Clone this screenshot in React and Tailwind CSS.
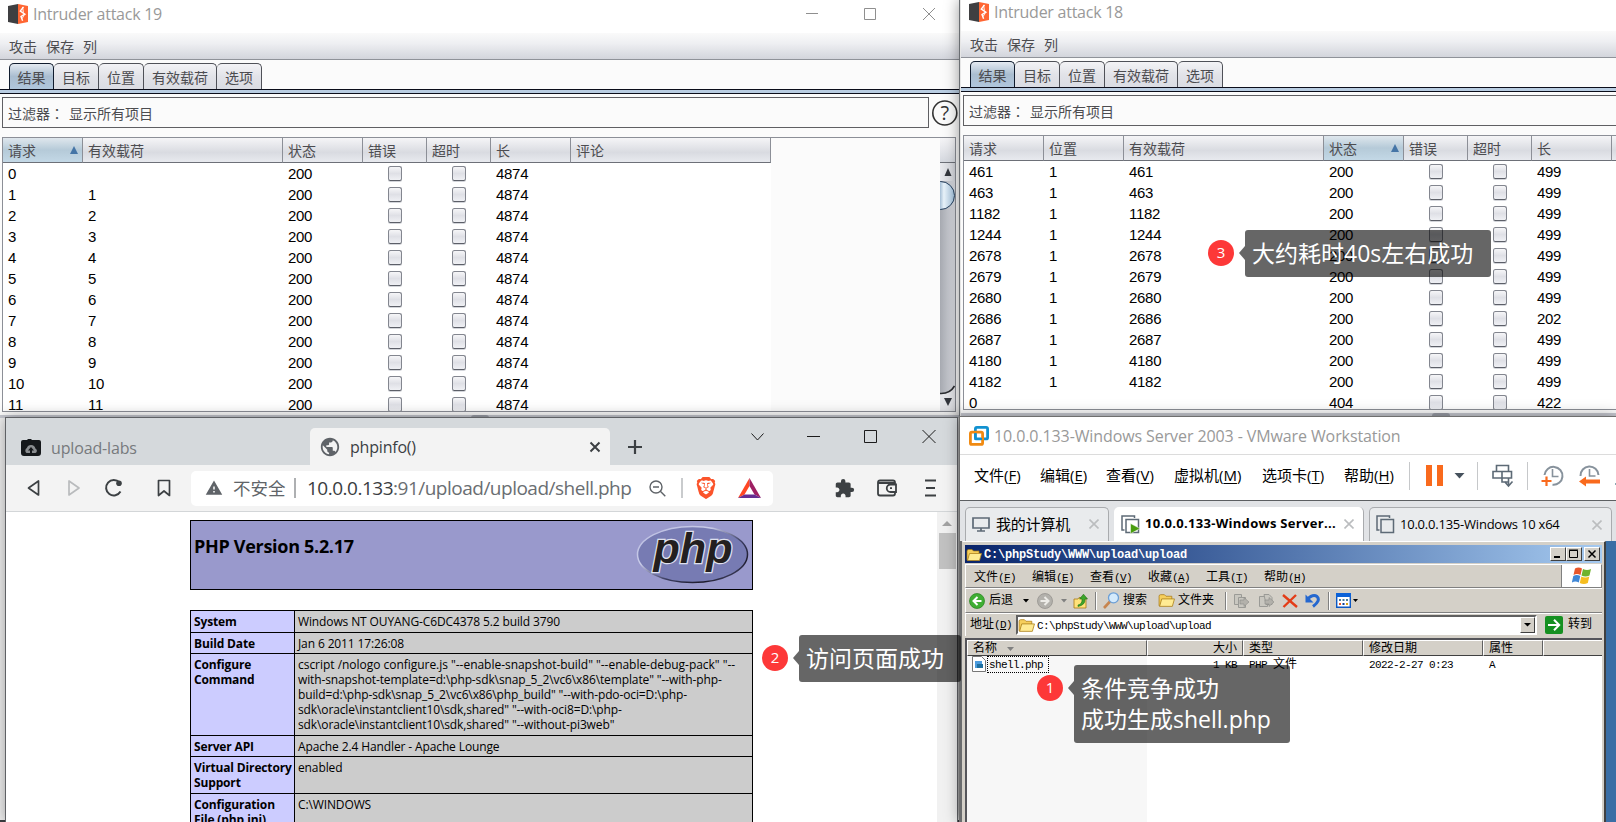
import React from "react";
import { MdExtension, MdPublic, MdWarning } from "react-icons/md";
import { SiBrave } from "react-icons/si";

/* ---------- Intruder windows ---------- */

function BurpLogo() {
  return (
    <svg width="20" height="20" viewBox="0 0 20 20" className="shrink-0">
      <path d="M0 2 10 0v20L0 18z" fill="#3f3f41" />
      <path d="M10 0 20 2v16l-10 2z" fill="#ff6633" />
      <path d="M15.5 2.8 12.3 7l4.6 3.2-3.9 2.3 1.6 4.2" fill="none" stroke="#fff" strokeWidth="1.4" />
      <path d="m14.6 3 .8 5.6M16.7 10l-2.6 4.6" fill="none" stroke="#fff" strokeWidth="0.9" />
    </svg>
  );
}

function CheckCell() {
  return (
    <span className="mx-auto mb-[1px] block h-[15px] w-[14px] rounded-[2.5px] border border-[#83868f] border-b-[#5c5f68] bg-linear-to-b from-[#f6f6f8] via-[#dfe0e6] to-[#eff0f4] shadow-[0_1px_0_#d3d5da]" />
  );
}

const TABS = [
  ["结果", "w-[45px]"],
  ["目标", "w-[45px]"],
  ["位置", "w-[45px]"],
  ["有效载荷", "w-[73px]"],
  ["选项", "w-[45px]"],
];

function IntruderWindow({ title, lead, columns, rows, wide, controls, tableHeight }) {
  return (
    <div className="flex h-full flex-col bg-[#fbfbfb] text-[14px] text-[#4c4c50]">
      <div className={`flex shrink-0 items-center bg-white pl-2 ${lead}`}>
        <BurpLogo />
        <span className="ml-[5px] text-[16px] leading-5 tracking-[-0.25px] text-[#999]">{title}</span>
        {controls}
      </div>
      <div className="flex h-[27px] shrink-0 items-center gap-[9px] border-b border-[#8f9299] bg-linear-to-b from-[#fafafa] via-[#eeeff2] via-40% to-[#d3d5dc] pl-[9px]">
        <span>攻击</span>
        <span>保存</span>
        <span>列</span>
      </div>
      <div className="flex h-[29px] shrink-0 items-end pl-[9px]">
        {TABS.map(([t, w], i) => (
          <div
            key={t}
            className={`flex h-[26px] items-center justify-center rounded-t-[5px] border border-b-0 pt-[1px] ${w} ${
              i === 0
                ? "z-10 border-[#101c2e] bg-linear-to-b from-[#e4eaf1] via-[#a9bdd0] to-[#b0c6dc]"
                : "border-l-0 border-[#4f5158] bg-linear-to-b from-[#f3f3f6] via-[#e2e3e8] to-[#dadce3]"
            }`}
          >
            {t}
          </div>
        ))}
      </div>
      <div className="h-[5px] shrink-0 border-y border-[#0b0d1a] bg-[#b9cde2]" />
      <div className="mt-[3px] flex h-[31px] shrink-0 items-center pl-[2px]">
        <div className={`flex h-[31px] shrink-0 items-center gap-[5px] border border-[#5f5f63] pl-[5px] pt-[1px] ${wide ? "w-[927px]" : "w-[700px]"}`}>
          <span className="flex w-14">过滤器<span className="font-[Noto_Sans_CJK_TC,sans-serif]">：</span></span>
          <span>显示所有项目</span>
        </div>
        {wide && (
          <svg width="26" height="26" viewBox="0 0 26 26" className="ml-[3px] shrink-0">
            <circle cx="12.8" cy="13" r="12" fill="none" stroke="#333" strokeWidth="1.6" />
            <text x="12.8" y="20" textAnchor="middle" fontSize="20" fill="#333" fontFamily="Open Sans, sans-serif">?</text>
          </svg>
        )}
      </div>
      <div className={`ml-[2px] mt-[9px] flex shrink-0 overflow-hidden border border-[#8c8f97] ${tableHeight} ${wide ? "w-[954px]" : "w-[700px]"}`}>
        <div className="flex-1">
          <div className="flex h-[25px]">
            {columns.map((c) => (
              <div
                key={c.label}
                className={`flex shrink-0 items-center justify-between border-b border-r border-b-[#6d7078] border-r-[#8c8f97] pl-[5px] pr-1 ${c.w} ${
                  c.sorted
                    ? "bg-linear-to-b from-[#dfe7ed] via-[#b5cad8] to-[#c3d8e6]"
                    : "bg-linear-to-b from-[#f5f5f7] via-[#d9dbe1] via-60% to-[#e8eaef]"
                }`}
              >
                <span>{c.label}</span>
                {c.sorted && (
                  <svg width="8" height="8" viewBox="0 0 8 8">
                    <path d="M4 0 8 8H0z" fill="#4575a6" />
                  </svg>
                )}
              </div>
            ))}
          </div>
          <div className={`bg-white ${wide ? "w-[768px]" : "w-[700px]"}`}>
            {rows.map((r, i) => (
              <div key={i} className="flex h-[21px] items-center font-[Liberation_Sans,sans-serif] text-[15px] leading-[21px] tracking-[-0.3px] text-black">
                {columns.map((c, j) => (
                  <div key={c.label} className={`shrink-0 ${c.check ? "" : "pl-[5px]"} ${c.w}`}>
                    {c.check ? <CheckCell /> : r[j]}
                  </div>
                ))}
              </div>
            ))}
          </div>
        </div>
        {wide && (
          <div className="flex w-[15px] shrink-0 flex-col overflow-hidden bg-linear-to-r from-[#a6a9b0] to-[#dadce2]">
            <div className="h-[25px] border-b border-[#6d7078] bg-linear-to-b from-[#f5f5f7] to-[#d5d8df]" />
            <div className="flex h-[18px] items-center justify-center bg-linear-to-r from-[#e8e9ed] to-[#d2d4da]">
              <svg width="8" height="8" viewBox="0 0 8 8">
                <path d="M4 0 7.5 8h-7z" fill="#33363d" />
              </svg>
            </div>
            <div className="-ml-4 h-[29px] w-[31px] shrink-0 rounded-[15px] border border-[#25405e] bg-linear-to-r from-[#9cb7d0] from-50% via-[#e9f3fa] via-65% to-[#a8c6df]" />
            <div className="flex-1" />
            <svg width="15" height="26" viewBox="0 0 15 26" className="shrink-0">
              <path d="M0 9Q13 9 15 0v26H0z" fill="#e3e4e8" />
              <path d="M0 8.5Q10 9 14.5 1" fill="none" stroke="#2a2c30" strokeWidth="1.6" />
              <path d="M4 13h8l-4 8z" fill="#33363d" />
            </svg>
          </div>
        )}
      </div>
      <div className="mt-[3px] flex h-[3px] shrink-0 justify-center bg-[#c6c8d0]">
        <span className={`h-[3px] w-[18px] rounded-t bg-[#999ca5] ${wide ? "" : "ml-[304px]"}`} />
      </div>
      <div className="flex-1 bg-[#efefef]" />
      <div className="h-[2px] shrink-0 bg-[#3c3e42]" />
    </div>
  );
}

const COLS_A = [
  { label: "请求", w: "w-[80px]", sorted: true },
  { label: "有效载荷", w: "w-[200px]" },
  { label: "状态", w: "w-[80px]" },
  { label: "错误", w: "w-[64px]", check: true },
  { label: "超时", w: "w-[64px]", check: true },
  { label: "长", w: "w-[80px]" },
  { label: "评论", w: "w-[200px]" },
];
const ROWS_A = Array.from({ length: 12 }, (_, i) => [i, i === 0 ? "" : i, 200, null, null, 4874, ""]);

const COLS_B = [
  { label: "请求", w: "w-[80px]" },
  { label: "位置", w: "w-[80px]" },
  { label: "有效载荷", w: "w-[200px]" },
  { label: "状态", w: "w-[80px]", sorted: true },
  { label: "错误", w: "w-[64px]", check: true },
  { label: "超时", w: "w-[64px]", check: true },
  { label: "长", w: "w-[80px]" },
  { label: "", w: "w-[40px]" },
];
const ROWS_B = [
  ...[461, 463, 1182, 1244, 2678, 2679, 2680, 2686, 2687, 4180, 4182].map((n) => [
    n, 1, n, 200, null, null, n === 2686 ? 202 : 499, "",
  ]),
  [0, "", "", 404, null, null, 422, ""],
];

function TitleControls() {
  return (
    <svg width="131" height="14" viewBox="0 0 131 14" className="ml-auto mr-[22px]" fill="none" stroke="#8f8f8f">
      <path d="M0 6.5h12M58.500 1.500h11v11h-11zM117 1l12 12M129 1l-12 12" />
    </svg>
  );
}

/* ---------- Browser ---------- */

function Browser() {
  return (
    <div className="flex h-full flex-col border border-b-0 border-[#5f6165] bg-white">
      <div className="flex h-[47px] shrink-0 bg-[#d5d9dc]">
        <div className="flex w-[304px] items-center pl-[15px] pt-[12px]">
          <svg width="20" height="17" viewBox="0 0 20 17">
            <path d="M0 3q0-2 2-2h4l1-1h3l1 1h7q2 0 2 2v11q0 3-3 3H3q-3 0-3-3z" fill="#15181b" />
            <path d="M5.500 14a3 3 0 0 1 .3-5 4.500 4.500 0 0 1 8.600.4 2.500 2.500 0 0 1 0 4.600z" fill="#8a8d90" />
            <path d="m10 8 3 3.500h-2V14H9v-2.500H7z" fill="#15181b" />
          </svg>
          <span className="ml-[10px] text-[16px] tracking-[-0.15px] text-[#777a7d]">upload-labs</span>
        </div>
        <div className="mt-[10px] flex w-[300px] items-center rounded-t-[5px] bg-[#f3f3f3] pl-[9px] pr-[9px] pt-[1px]">
          <MdPublic size={22} color="#5f6368" />
          <span className="ml-[9px] text-[16px] tracking-[-0.2px] text-[#3c4043]">phpinfo()</span>
          <svg width="12" height="12" viewBox="0 0 12 12" className="ml-auto" stroke="#3c4043" strokeWidth="2">
            <path d="m1.500 1.500 9 9m0-9-9 9" />
          </svg>
        </div>
        <svg width="16" height="16" viewBox="0 0 16 16" className="ml-[17px] mt-[21px]" stroke="#3c4043" strokeWidth="2.200">
          <path d="M8 1v14M1 8h14" />
        </svg>
        <svg width="188" height="16" viewBox="0 0 188 16" className="ml-auto mr-[-1px] mt-[10px]" fill="none" stroke="#1c1c1c">
          <path d="m3.500 5.500 6 6.500 6-6.500M59 8.500h13M116.500 2.500h12v12h-12zM187.500 2l-13 13M174.500 2l13 13" />
        </svg>
        <div className="w-[22px]" />
      </div>
      <div className="flex h-[47px] shrink-0 items-center border-b border-[#d3d6d8] bg-[#f3f3f3]">
        <svg width="150" height="20" viewBox="0 0 150 20" className="ml-[20px] shrink-0" fill="none" stroke="#3c4043" strokeWidth="1.700" strokeLinejoin="round">
          <path d="m2.500 10 10-7v14z" />
          <path d="m53 10-10-7v14z" stroke="#b9bbbd" />
          <path d="M94.500 13.500a7.700 7.700 0 1 1-1-9" strokeWidth="2" />
          <circle cx="93" cy="5.300" r="2.800" fill="#3c4043" stroke="none" />
          <path d="M132.500 2.500h11v15l-5.500-4.500-5.500 4.500z" />
        </svg>
        <div className="ml-[15px] flex h-[35px] w-[582px] shrink-0 items-center rounded-[5px] bg-white pl-[14px]">
          <MdWarning size={18} color="#5f6368" />
          <span className="ml-[10px] w-[53px] whitespace-nowrap text-[17.5px] text-[#606468]">不安全</span>
          <span className="ml-[8px] h-5 w-[2px] bg-[#aeb0b2]" />
          <span className="ml-[11px] w-[330px] whitespace-nowrap text-[19px] leading-6 tracking-[-0.5px] text-[#6a6e72]">
            <span className="text-[#3a3d41]">10.0.0.133</span>:91/upload/upload/shell.php
          </span>
          <svg width="17" height="17" viewBox="0 0 17 17" className="ml-[12px]" fill="none" stroke="#5f6368" strokeWidth="1.400">
            <circle cx="7" cy="7" r="6" />
            <path d="m11.300 11.300 5 5M4 7h6" />
          </svg>
          <span className="ml-[15px] h-5 w-[2px] bg-[#c9cbcd]" />
          <SiBrave size={22} color="#fb542b" className="ml-[12px] shrink-0" />
          <svg width="23" height="20" viewBox="0 0 23 20" className="ml-[21px] shrink-0">
            <path d="M11.500 0 0 20l6.500-3.500 5-8.500z" fill="#ff4724" />
            <path d="M11.500 0 23 20l-6.500-3.500-5-8.500z" fill="#9e1f63" />
            <path d="M0 20h23l-6.500-3.500h-10z" fill="#662d91" />
          </svg>
        </div>
        <MdExtension size={21} color="#3c4043" className="ml-[61px] shrink-0" />
        <svg width="60" height="20" viewBox="0 0 60 20" className="ml-[22px] shrink-0" fill="none" stroke="#3c4043" strokeWidth="1.800">
          <path d="M18 6V4.500q0-2-2-2H3q-2 0-2 2v11q0 2 2 2h13q2 0 2-2V14M1 5h17" />
          <path d="M19 6.500h-5.500a3.700 3.700 0 0 0 0 7.500H19z" fill="#f3f3f3" />
          <path d="M13 10.200h2M48 2.500h11M49 10h9M48 17.500h11" />
        </svg>
      </div>
      <div className="flex min-h-0 flex-1 overflow-hidden">
        <div className="w-[931px] shrink-0 pl-[184px] pt-[8px] text-black">
          <div className="flex h-[70px] w-[563px] justify-between border border-black bg-[#9999cc] pl-[3px] pr-[3px]">
            <h1 className="mt-[13px] text-[18px] font-bold leading-6 tracking-[-0.3px]">PHP Version 5.2.17</h1>
            <svg width="113" height="60" viewBox="0 0 113 60" className="mt-[4px]">
              <defs>
                <linearGradient id="rim" x1="0" y1="0" x2="1" y2="1">
                  <stop offset="0" stopColor="#b9bce0" />
                  <stop offset="0.350" stopColor="#c8cbe8" />
                  <stop offset="0.600" stopColor="#3a3c60" />
                  <stop offset="0.800" stopColor="#1d1b2c" />
                  <stop offset="1" stopColor="#777bb3" />
                </linearGradient>
              </defs>
              <ellipse cx="56.500" cy="29.500" rx="55" ry="28" fill="#777bb3" stroke="url(#rim)" strokeWidth="1.500" />
              <text x="57" y="38" textAnchor="middle" fontFamily="Liberation Sans, sans-serif" fontWeight="bold" fontStyle="italic" fontSize="42" textLength="79" lengthAdjust="spacingAndGlyphs" fill="#231f20" stroke="#dfe0ee" strokeWidth="2.500" paintOrder="stroke">
                php
              </text>
            </svg>
          </div>
          <div className="mt-[20px] w-[563px] border-x border-t border-black text-[12px] leading-[15px]">
            {PHP_ROWS.map(([k, v, h]) => (
              <div key={k[0]} className={`flex border-b border-black ${h}`}>
                <div className="w-[104px] shrink-0 border-r border-black bg-[#ccccff] pl-[3px] pt-[3px] font-bold tracking-[-0.15px]">
                  {k.map((s) => (
                    <div key={s} className="whitespace-nowrap">{s}</div>
                  ))}
                </div>
                <div className="flex-1 bg-[#cccccc] pl-[3px] pt-[3px] tracking-[-0.12px]">
                  {v.map((s) => (
                    <div key={s} className={`whitespace-nowrap ${s.startsWith("cscript") ? "tracking-[-0.03px]" : ""}`}>{s}</div>
                  ))}
                </div>
              </div>
            ))}
          </div>
        </div>
        <div className="flex flex-1 flex-col items-center bg-[#f1f1f1] pt-[9px]">
          <svg width="10" height="5" viewBox="0 0 10 5">
            <path d="m5 0 5 5H0z" fill="#a3a3a3" />
          </svg>
          <div className="mt-[7px] h-[36px] w-[17px] bg-[#c1c1c1]" />
        </div>
      </div>
    </div>
  );
}

const PHP_ROWS = [
  [["System"], ["Windows NT OUYANG-C6DC4378 5.2 build 3790"], "h-[22px]"],
  [["Build Date"], ["Jan 6 2011 17:26:08"], "h-[21px]"],
  [
    ["Configure", "Command"],
    [
      'cscript /nologo configure.js "--enable-snapshot-build" "--enable-debug-pack" "--',
      'with-snapshot-template=d:\\php-sdk\\snap_5_2\\vc6\\x86\\template" "--with-php-',
      'build=d:\\php-sdk\\snap_5_2\\vc6\\x86\\php_build" "--with-pdo-oci=D:\\php-',
      'sdk\\oracle\\instantclient10\\sdk,shared" "--with-oci8=D:\\php-',
      'sdk\\oracle\\instantclient10\\sdk,shared" "--without-pi3web"',
    ],
    "h-[82px]",
  ],
  [["Server API"], ["Apache 2.4 Handler - Apache Lounge"], "h-[21px]"],
  [["Virtual Directory", "Support"], ["enabled"], "h-[37px]"],
  [["Configuration", "File (php.ini)"], ["C:\\WINDOWS"], "h-[40px]"],
];

/* ---------- VMware + guest ---------- */

function Item({ t, k, w }) {
  return (
    <span className={`shrink-0 whitespace-nowrap ${w}`}>
      {t}(<u className="underline-offset-2">{k}</u>)
    </span>
  );
}

function CloseMark() {
  return (
    <svg width="10" height="10" viewBox="0 0 10 10" className="shrink-0" stroke="#bbbdbf" strokeWidth="1.600">
      <path d="m.5.5 9 9m0-9-9 9" />
    </svg>
  );
}

function VmStack({ running }) {
  return (
    <svg width="19" height="19" viewBox="0 0 19 19" className="shrink-0" fill="none" stroke="#5d6a76" strokeWidth="1.500">
      <path d="M13.500 3V1H1v14h2.500" />
      <path d="M5 4.500h12.500v13H5z" fill={running ? "#fff" : "#e9ebed"} />
      {running && <path d="M9.500 8.500 19 13.500l-9.500 5.200z" fill="#4a9d10" stroke="#fff" strokeWidth="0.500" />}
    </svg>
  );
}

function Folder({ size = 16 }) {
  return (
    <svg width={size} height={size} viewBox="0 0 16 16" className="shrink-0">
      <path d="M1 4q0-1.500 1.500-1.500H6L7.500 4H13v3H4l-2 6H1z" fill="#f6cf5c" stroke="#a87a14" strokeWidth="0.700" />
      <path d="M3.500 6.500H15.500L13.500 13.500H1.500z" fill="#ffeb93" stroke="#b08520" strokeWidth="0.800" />
    </svg>
  );
}

function CaptionButton({ children, cls = "" }) {
  return (
    <div className={`h-[14px] w-[16px] border border-b-[#404040] border-l-white border-r-[#404040] border-t-white bg-[#d4d0c8] ${cls}`}>
      <svg width="14" height="12" viewBox="0 0 14 12" fill="none" stroke="#000">
        {children}
      </svg>
    </div>
  );
}

function Divider() {
  return <span className="block h-[18px] w-[2px] shrink-0 border-l border-r border-l-[#808080] border-r-white" />;
}

function Sheets({ right }) {
  return (
    <svg width="17" height="16" viewBox="0 0 17 16" className="shrink-0" fill="#c9c7c0" stroke="#9a9a96">
      <path d={right ? "M1.500 3.500h5l3 3v7h-8z" : "M1.500 1.500h7v10h-7z"} />
      <path d={right ? "M6 1.500h5l3 3v7H8z" : "M5.500 4.500h7v10h-7z"} />
      <path d="M7 7h4V4.500L16 9l-5 4.500V11H7z" fill="#b3b1ab" stroke="#8b8b88" strokeWidth="0.600" />
    </svg>
  );
}

const SONG = "font-[Liberation_Mono,Noto_Sans_CJK_SC,monospace]";

const LIST_COLS = [
  { t: "名称", w: "w-[180px]" },
  { t: "大小", w: "w-[96px]", right: true },
  { t: "类型", w: "w-[120px]" },
  { t: "修改日期", w: "w-[120px]" },
  { t: "属性", w: "w-[60px]" },
  { t: "", w: "w-[60px]" },
];

function Explorer() {
  return (
    <div className={`flex h-full w-[644px] shrink-0 flex-col border-l border-t border-l-[#d4d0c8] border-r-2 border-t-white border-r-[#404040] bg-[#d4d0c8] pl-[2px] pr-[2px] pt-[3px] text-[12px] leading-[14px] text-black ${SONG}`}>
      <div className="flex h-[18px] shrink-0 items-center bg-linear-to-r from-[#0a246a] to-[#a6caf0] pl-[1px] pr-[2px] pt-[1px]">
        <Folder />
        <span className="ml-[2px] text-[12px] font-bold tracking-[-0.2px] text-white">C:\phpStudy\WWW\upload\upload</span>
        <div className="ml-auto flex pb-[1px]">
          <CaptionButton><path d="M3 9h6" strokeWidth="2" /></CaptionButton>
          <CaptionButton><path d="M2.500 2.500h8v7h-8zM2 2h9" /></CaptionButton>
          <CaptionButton cls="ml-[2px]"><path d="m3.500 2.500 7 7m0-7-7 7" strokeWidth="1.500" /></CaptionButton>
        </div>
      </div>
      <div className="mt-[1px] flex h-[24px] shrink-0 border border-[#808080] border-l-white border-t-white">
        <div className="flex flex-1 items-center border-r border-[#808080] pl-[8px] pt-[3px] text-[11px] tracking-[-0.6px]">
          {[["文件", "F"], ["编辑", "E"], ["查看", "V"], ["收藏", "A"], ["工具", "T"], ["帮助", "H"]].map(([t, k]) => (
            <span key={k} className="w-[58px] shrink-0 whitespace-nowrap">
              <span className="text-[12px] tracking-normal">{t}</span>(<u>{k}</u>)
            </span>
          ))}
        </div>
        <div className="flex w-[39px] items-center justify-center bg-white">
          <svg width="20" height="18" viewBox="0 0 20 18">
            <path d="M3 1.500q3.500-1.800 7 0L8.500 8q-3.500-1.800-7 0z" fill="#e8562a" />
            <path d="M11 2q4 1.800 8 0l-1.500 6.500q-4 1.800-8 0z" fill="#6fb32c" />
            <path d="M1.300 9q3.500-1.800 7 0L6.800 15.500q-3.500-1.800-7 0z" fill="#3f87d6" />
            <path d="M9.300 9.500q4 1.800 8 0L15.800 16q-4 1.800-8 0z" fill="#f6bd1f" />
          </svg>
        </div>
      </div>
      <div className="flex h-[25px] shrink-0 items-center border-b border-l border-t border-b-[#808080] border-l-white border-t-white pl-[3px]">
        <svg width="16" height="16" viewBox="0 0 16 16">
          <circle cx="8" cy="8" r="7.500" fill="#3fae33" stroke="#23811b" strokeWidth="0.700" />
          <path d="M12.500 8H5m3.500-4L4.500 8l4 4" fill="none" stroke="#fff" strokeWidth="2" />
        </svg>
        <span className="ml-[4px]">后退</span>
        <svg width="6" height="4" viewBox="0 0 6 4" className="ml-[10px]"><path d="M0 0h6L3 3.500z" /></svg>
        <svg width="16" height="16" viewBox="0 0 16 16" className="ml-[8px]">
          <circle cx="8" cy="8" r="7.500" fill="#b3b1ac" stroke="#8f8d88" strokeWidth="0.700" />
          <path d="M3.500 8H11M7.500 4l4 4-4 4" fill="none" stroke="#ecebe7" strokeWidth="2" />
        </svg>
        <svg width="6" height="4" viewBox="0 0 6 4" className="ml-[8px]"><path d="M0 0h6L3 3.500z" fill="#808080" /></svg>
        <svg width="16" height="16" viewBox="0 0 16 16" className="ml-[6px]">
          <path d="M1 6h4l1-1.500h7V15H1z" fill="#ffe27a" stroke="#a87a14" strokeWidth="0.800" />
          <path d="M5 12q4.500-1 4-6H6.500L10.500 1.200 14.500 6H12q.5 6-7 7.500z" fill="#3da52b" stroke="#1e7014" strokeWidth="0.600" />
        </svg>
        <span className="ml-[6px]"><Divider /></span>
        <svg width="17" height="17" viewBox="0 0 17 17" className="ml-[6px]">
          <path d="m1 16 6-6.500" stroke="#c7854f" strokeWidth="2.600" />
          <circle cx="10.500" cy="5.800" r="5" fill="#d4eafc" stroke="#6c9fd6" strokeWidth="1.300" />
        </svg>
        <span className="ml-[3px]">搜索</span>
        <span className="ml-[11px] flex"><Folder size={17} /></span>
        <span className="ml-[3px]">文件夹</span>
        <span className="ml-[11px]"><Divider /></span>
        <span className="ml-[6px] flex gap-[8px]"><Sheets /><Sheets right /></span>
        <svg width="16" height="14" viewBox="0 0 16 14" className="ml-[7px]" stroke="#e33c17" strokeWidth="2.400">
          <path d="m1 1 14 12M14 1 1.500 13" />
        </svg>
        <svg width="16" height="16" viewBox="0 0 16 16" className="ml-[7px]" fill="none">
          <path d="M2 6.500Q8 .5 12 3.500q4 4-4 10" stroke="#2467cf" strokeWidth="3" />
          <path d="M.500 1.500v8h8z" fill="#2467cf" />
        </svg>
        <span className="ml-[7px]"><Divider /></span>
        <svg width="22" height="15" viewBox="0 0 22 15" className="ml-[6px]">
          <path d="M.7.700h13.600v13.600H.7z" fill="#fff" stroke="#0b58c4" strokeWidth="1.400" />
          <path d="M0 0h15v4H0z" fill="#0b62d8" />
          <path d="M3 6h2v2H3zM6.500 6h2v2h-2zM10 6h2v2h-2z" fill="#4a7d9c" />
          <path d="M3 10h2v2H3z" fill="#e8562a" /><path d="M6.500 10h2v2h-2z" fill="#0b3f9a" /><path d="M10 10h2v2h-2z" fill="#d9a515" />
          <path d="M17 6h5l-2.500 3z" />
        </svg>
      </div>
      <div className="flex h-[23px] shrink-0 items-center border-l border-t border-white pl-[4px] text-[11px] tracking-[-0.6px]">
        <span className="w-[46px] whitespace-nowrap"><span className="text-[12px] tracking-normal">地址</span>(<u>D</u>)</span>
        <div className="flex h-[20px] w-[521px] items-center border-2 border-b-white border-l-[#606060] border-r-white border-t-[#606060] bg-white">
          <Folder size={17} />
          <span className="ml-[2px] pt-[2px]">C:\phpStudy\WWW\upload\upload</span>
          <div className="ml-auto flex h-[16px] w-[15px] items-center justify-center border border-b-[#404040] border-l-white border-r-[#404040] border-t-white bg-[#d4d0c8]">
            <svg width="7" height="4" viewBox="0 0 7 4"><path d="M0 0h7L3.500 3.500z" /></svg>
          </div>
        </div>
        <svg width="18" height="18" viewBox="0 0 18 18" className="ml-[8px]">
          <rect width="18" height="18" rx="2" fill="#159021" />
          <path d="M3 9h11M9 3.800 14.200 9 9 14.200" fill="none" stroke="#fff" strokeWidth="2" />
        </svg>
        <span className="ml-[5px] text-[12px] tracking-normal">转到</span>
      </div>
      <div className="mt-[2px] flex flex-1 flex-col border-l-2 border-t-2 border-[#55555a] bg-white">
        <div className="flex h-[16px] shrink-0 overflow-hidden">
          {LIST_COLS.map((c) => (
            <div key={c.t} className={`flex shrink-0 items-center whitespace-nowrap border border-b-[#404040] border-l-white border-r-[#606060] border-t-white bg-[#d4d0c8] px-[5px] pt-[1px] ${c.w} ${c.right ? "justify-end" : ""}`}>
              {c.t}
              {c.t === "名称" && (
                <svg width="7" height="4" viewBox="0 0 7 4" className="ml-[10px]"><path d="M0 0h7L3.500 4z" fill="#808080" /></svg>
              )}
            </div>
          ))}
        </div>
        <div className="flex flex-1 text-[11px] tracking-[-0.6px]">
          <div className="flex w-[180px] shrink-0 items-start bg-[#f7f7f7] pl-[5px]">
            <svg width="14" height="16" viewBox="0 0 14 16">
              <path d="M.5.500h9l4 4v11H.5z" fill="#fff" stroke="#777" />
              <path d="M3 5h7v7H3z" fill="#4b9bdd" /><path d="M5 8h6v4H5z" fill="#1f6f9f" />
            </svg>
            <span className="ml-[1px] h-[17px] w-[62px] border border-dotted border-black pl-[1px] pt-[1px]">shell.php</span>
          </div>
          <div className="flex pt-[2px]">
            <span className="w-[96px] pr-[6px] text-right">1 KB</span>
            <span className="w-[120px] pl-[6px]">PHP <span className="text-[12px] tracking-normal">文件</span></span>
            <span className="w-[120px] pl-[6px]">2022-2-27 0:23</span>
            <span className="w-[60px] pl-[6px]">A</span>
          </div>
        </div>
      </div>
    </div>
  );
}

function VMware() {
  return (
    <div className="flex h-full flex-col border-l border-t border-[#6f6f6f] bg-white">
      <div className="flex h-[38px] shrink-0 items-center border-b border-[#dcdcdc] pl-[9px]">
        <svg width="20" height="20" viewBox="0 0 20 20" fill="none" strokeWidth="2.800">
          <rect x="6.400" y="1.400" width="12.200" height="11.500" rx="1.500" stroke="#1191d0" />
          <rect x="1.400" y="6.200" width="12.200" height="12.200" rx="1.500" stroke="#f08a12" />
          <path d="M6.400 7v5.900H13" stroke="#1191d0" strokeWidth="2" />
        </svg>
        <span className="ml-[5px] whitespace-nowrap text-[16px] tracking-[-0.1px] text-[#999]">10.0.0.133-Windows Server 2003 - VMware Workstation</span>
      </div>
      <div className="flex h-[46px] shrink-0 items-center border-b border-[#5c5f62] pb-[4px] pl-[14px] text-[15px] text-black">
        <Item t="文件" k="F" w="w-[66px]" />
        <Item t="编辑" k="E" w="w-[66px]" />
        <Item t="查看" k="V" w="w-[68px]" />
        <Item t="虚拟机" k="M" w="w-[88px]" />
        <Item t="选项卡" k="T" w="w-[82px]" />
        <Item t="帮助" k="H" w="w-[64px]" />
        <svg width="210" height="28" viewBox="0 0 210 28" className="shrink-0" fill="none">
          <path d="M1.500 0v28M69.500 0v28M119.500 0v28" stroke="#c6c8ca" />
          <path d="M18 3h6v21h-6zM29 3h6v21h-6z" fill="#f96a1d" />
          <path d="M46.500 11h10l-5 5.500z" fill="#46525d" />
          <g stroke="#5d6a76" strokeWidth="1.600">
            <path d="M88.500 3.500h12v6h-12zM85 9.500h9v6.500h-9zM94 9.500h9.500v6.500H94zM100.500 16v8M96.500 19.500l4 4.500 4-4.500M94 16v4h6" />
          </g>
          <g stroke="#87929c" strokeWidth="2">
            <path d="M136.500 13a9 9 0 1 1 8 9.800" /><path d="M144.500 7v7.500h6" strokeWidth="1.600" />
            <path d="M172.500 14a9 9 0 0 1 18-1" /><path d="M181.500 7v7h6" strokeWidth="1.600" />
          </g>
          <path d="M133.500 19h10M138.500 14.500v9.500" stroke="#f96a1d" strokeWidth="2.200" />
          <path d="m171 19.500 7-5v3h14v4h-14v3z" fill="#f96a1d" />
          <path d="M208 12h2M207 22h3" stroke="#8ba9b5" strokeWidth="2" />
        </svg>
      </div>
      <div className="flex h-[40px] shrink-0 items-end bg-[#e1e3e6] pl-[5px] text-[13px] text-black">
        <div className="flex h-[34px] w-[144px] shrink-0 items-center rounded-t-[5px] border border-b-0 border-[#a9abae] bg-[#e9ebed] pb-[1px] pl-[6px] pr-[9px]">
          <svg width="18" height="15" viewBox="0 0 18 15" fill="none" stroke="#5d6a76" strokeWidth="1.700">
            <path d="M1 1h16v10H1zM9 11v3M5 14h8" />
          </svg>
          <span className="ml-[6px] text-[15px] tracking-[-0.2px]">我的计算机</span>
          <span className="ml-auto"><CloseMark /></span>
        </div>
        <div className="ml-[5px] flex h-[34px] w-[250px] shrink-0 items-center rounded-t-[5px] border-r border-[#a9abae] bg-white pl-[7px] pr-[9px]">
          <VmStack running />
          <span className="ml-[5px] whitespace-nowrap font-bold tracking-[0.3px]">10.0.0.133-Windows Server...</span>
          <span className="ml-auto"><CloseMark /></span>
        </div>
        <div className="ml-[5px] flex h-[34px] w-[243px] shrink-0 items-center rounded-t-[5px] border border-b-0 border-[#a9abae] bg-[#e9ebed] pl-[6px] pr-[9px]">
          <VmStack />
          <span className="ml-[5px] whitespace-nowrap tracking-[-0.22px]">10.0.0.135-Windows 10 x64</span>
          <span className="ml-auto"><CloseMark /></span>
        </div>
      </div>
      <div className="flex min-h-0 flex-1 bg-[#3a6ea5]">
        <div className="w-[2px] shrink-0 bg-[#6a6c6e]" />
        <Explorer />
      </div>
    </div>
  );
}

/* ---------- Callouts ---------- */

function Callout({ n, children, pos, box }) {
  return (
    <div className={`absolute z-50 flex items-start ${pos}`}>
      <span className="mt-[10px] flex h-[26px] w-[26px] items-center justify-center rounded-full bg-[#fd3838] pb-[2px] text-[15px] leading-none text-white">{n}</span>
      <svg width="6" height="14" viewBox="0 0 6 14" className="ml-[5px] mt-[16px] shrink-0">
        <path d="M6 0v14L0 7z" fill="#000" fillOpacity="0.600" />
      </svg>
      <div className={`whitespace-nowrap rounded-[3px] bg-black/60 pl-[7px] pt-[8px] text-[23px] leading-[31px] text-white ${box}`}>{children}</div>
    </div>
  );
}

export default function App() {
  return (
    <div className="relative h-[822px] w-[1616px] overflow-hidden bg-[#e6e6e6] font-[Open_Sans,Noto_Sans_CJK_SC,sans-serif]">
      <div className="absolute left-0 top-0 h-[822px] w-[959px] overflow-hidden">
        <IntruderWindow title="Intruder attack 19" lead="h-[33px] pb-[5px]" columns={COLS_A} rows={ROWS_A} wide controls={<TitleControls />} tableHeight="h-[275px]" />
      </div>
      <div className="absolute left-[959px] top-0 h-[822px] w-[657px] border-l border-[#6a6e72] shadow-[0_0_14px_rgba(0,0,0,0.400)]">
        <div className="h-full overflow-hidden pl-[1px]">
          <IntruderWindow title="Intruder attack 18" lead="h-[31px] pb-[7px]" columns={COLS_B} rows={ROWS_B} tableHeight="h-[275px]" />
        </div>
      </div>
      <div className="absolute left-[5px] top-[417px] h-[405px] w-[953px] shadow-[0_0_14px_rgba(0,0,0,0.350)]">
        <Browser />
      </div>
      <div className="absolute left-[959px] top-[416px] h-[406px] w-[657px] shadow-[0_0_14px_rgba(0,0,0,0.350)]">
        <VMware />
      </div>
      <Callout n="3" pos="left-[1208px] top-[230px]" box="h-[47px] w-[246px]">大约耗时40s左右成功</Callout>
      <Callout n="2" pos="left-[762px] top-[635px]" box="h-[47px] w-[162px]">访问页面成功</Callout>
      <Callout n="1" pos="left-[1037px] top-[665px]" box="h-[78px] w-[216px]">
        条件竞争成功
        <br />
        成功生成shell.php
      </Callout>
    </div>
  );
}
